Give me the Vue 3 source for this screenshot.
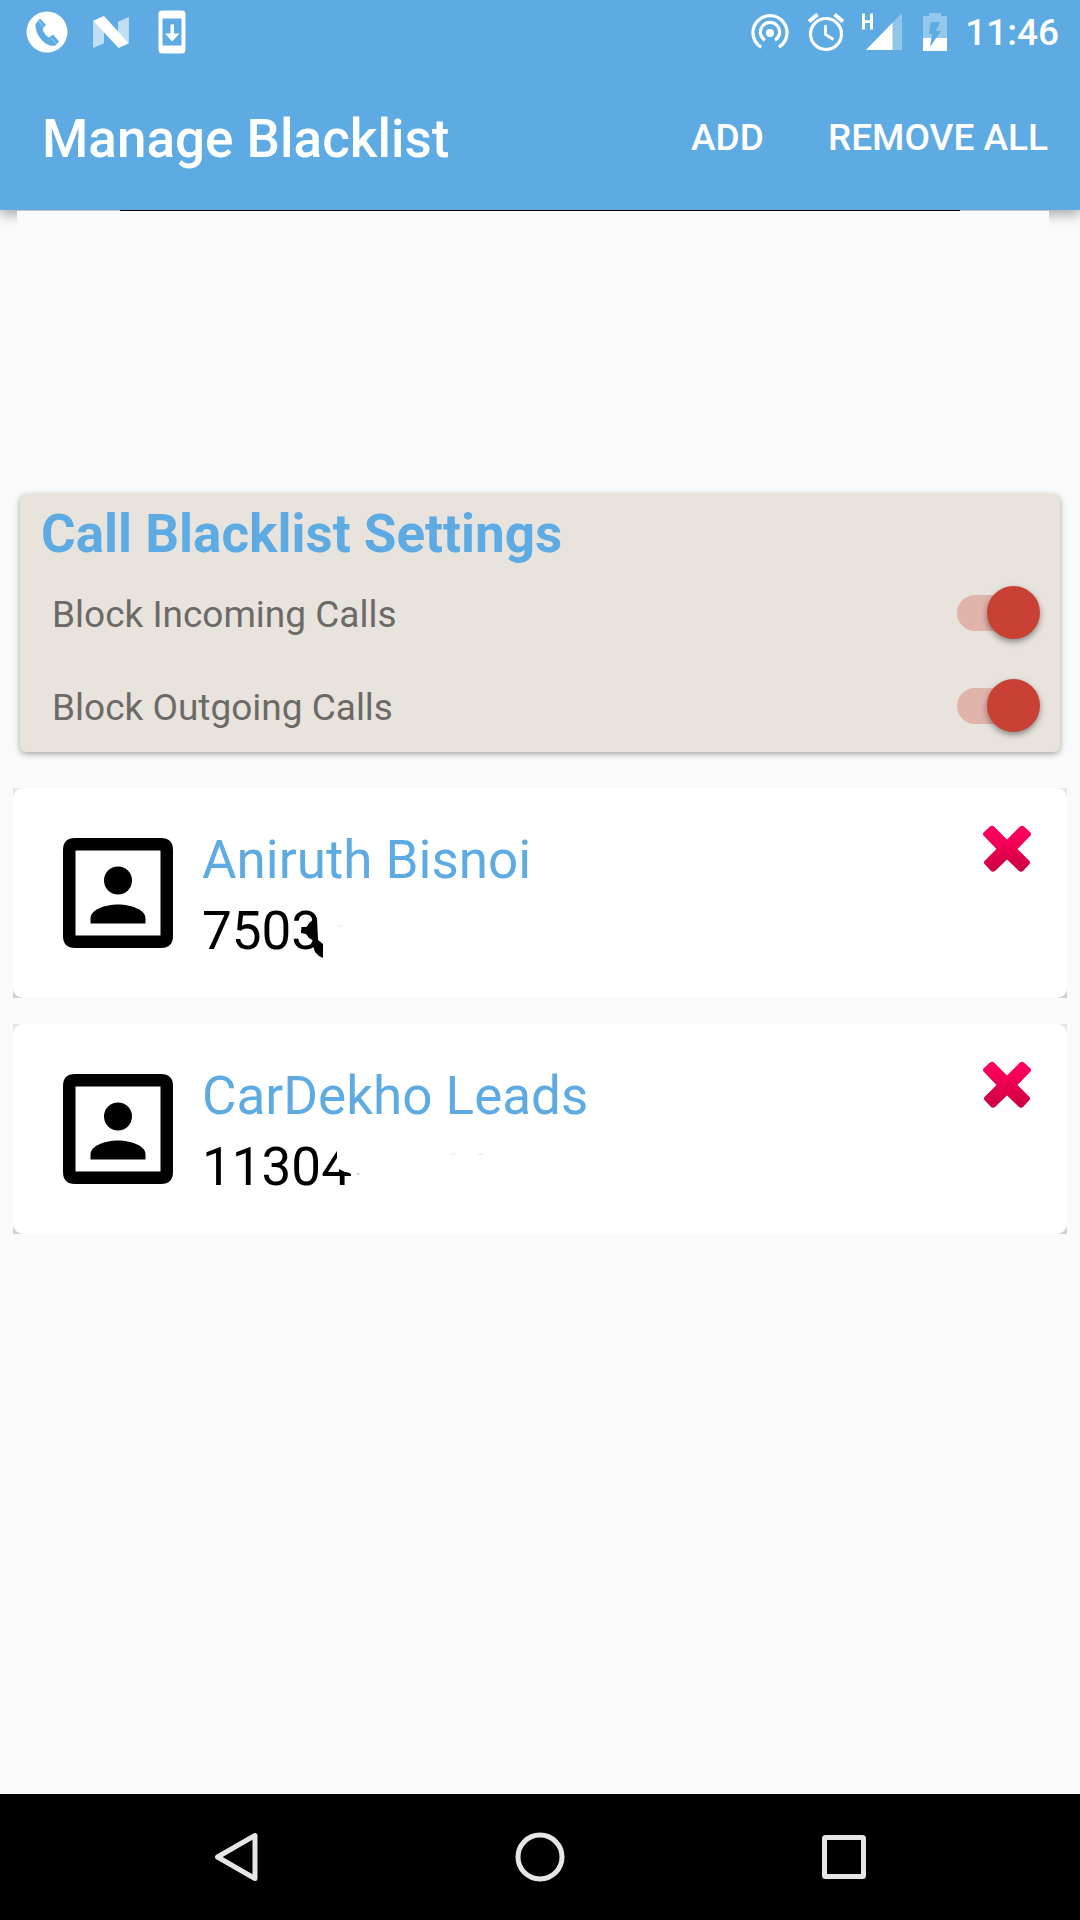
<script setup>
import { ref } from 'vue'

const settings = ref([
  { id: 'incoming', label: 'Block Incoming Calls', on: true },
  { id: 'outgoing', label: 'Block Outgoing Calls', on: true },
])

const contacts = ref([
  { name: 'Aniruth Bisnoi', number: '7503', mask: 'blot' },
  { name: 'CarDekho Leads', number: '11304', mask: 'erase' },
])

function remove(index) {
  contacts.value.splice(index, 1)
}

function removeAll() {
  contacts.value = []
}
</script>

<template>
  <div class="screen">
    <header class="top">
      <div class="status">
        <div class="notes">
          <svg width="42" height="42" viewBox="0 0 42 42" aria-hidden="true">
            <circle cx="21" cy="21" r="20.5" fill="#fff" />
            <path d="M9.500 13l4.500-5.500 6 6.500-3.500 4c1 4 3.500 6.500 6.500 8.500l4-3 6 7-3.500 4c-8 2.500-20.500-8.500-20-21.500z" fill="#5dabe2" />
            <path d="M12.500 9.500l5.500 7M25.500 27.500l6 6.500" stroke="#fff" stroke-width="0.800" opacity=".6" />
          </svg>
          <svg width="38" height="32" viewBox="0 0 40 34" aria-hidden="true">
            <path d="M1 5v29l11.500-5V10zM39 1v28L27.500 17V6z" fill="#fff" opacity=".62" />
            <path d="M1 5l11.500-5L39 29l-11 5z" fill="#fff" />
          </svg>
          <svg width="28" height="44" viewBox="0 0 28 44" aria-hidden="true">
            <path fill-rule="evenodd" d="M4 .5h20q3.500 0 3.500 3.500v35.500q0 4-3.500 4H4q-3.500 0-3.500-4V4Q.5.500 4 .5zM4.500 8.500v27h19v-27z" fill="#fff" />
            <path d="M12.500 14.500h3.500v9h5.500L14.200 31.500 7 23.500h5.500z" fill="#fff" />
          </svg>
        </div>
        <div class="signals">
          <svg width="38" height="38" viewBox="0 0 38 38" fill="none" stroke="#fff" stroke-width="3.200" aria-hidden="true">
            <path d="M10.200 34.200a17 17 0 1 1 17.600 0" />
            <path d="M14 27.200a9.600 9.600 0 1 1 10 0" />
            <circle cx="19" cy="20" r="4" fill="#fff" stroke="none" />
          </svg>
          <svg width="38" height="38" viewBox="0 0 38 38" fill="none" stroke="#fff" stroke-width="3.200" aria-hidden="true">
            <circle cx="19" cy="21" r="15.500" />
            <path d="M2 8.500l8.500-7M36 8.500l-8.500-7" stroke-width="4" />
            <path d="M18.500 12v9.500l8 5" stroke-width="2.800" />
          </svg>
          <svg class="cell" width="42" height="38" viewBox="0 0 42 38" aria-hidden="true">
            <path d="M41 0v37H5z" fill="#fff" opacity=".32" />
            <path d="M31.500 9.800V37H5z" fill="#fff" />
            <path d="M1 .5h3v6.700h5V.5h3v16H9V10H4v6.500H1z" fill="#fff" />
          </svg>
          <svg width="24" height="38" viewBox="0 0 24 38" aria-hidden="true">
            <path d="M0 3h6V0h12v3h6v22H0z" fill="#fff" opacity=".34" />
            <path d="M0 25h24v13H0z" fill="#fff" />
            <path d="M8 9h9l-4 9h5L7 34l2-13H6z" fill="#5dabe2" />
          </svg>
          <time class="clock">11:46</time>
        </div>
      </div>
      <div class="bar">
        <h1>Manage Blacklist</h1>
        <div class="actions">
          <button type="button">ADD</button>
          <button type="button" @click="removeAll">REMOVE ALL</button>
        </div>
      </div>
    </header>

    <main>
      <div class="panel"><div class="rule"></div></div>

      <section class="settings">
        <h2>Call Blacklist Settings</h2>
        <label v-for="item in settings" :key="item.id" class="setting" :for="item.id">
          <span>{{ item.label }}</span>
          <input :id="item.id" v-model="item.on" type="checkbox" role="switch" class="switch" />
        </label>
      </section>

      <ul class="contacts">
        <li v-for="(contact, index) in contacts" :key="contact.name" class="slot">
          <article class="contact">
            <svg class="avatar" width="110" height="110" viewBox="0 0 110 110" aria-hidden="true">
              <path fill-rule="evenodd" d="M12 0h86q12 0 12 12v86q0 12-12 12H12Q0 110 0 98V12Q0 0 12 0zM12.500 12.500v85h85v-85z" />
              <circle cx="55" cy="42.500" r="14" />
              <path d="M27.500 85.500v-5c0-9 15-14 27.500-14s27.500 5 27.500 14v5z" />
            </svg>
            <div class="who">
              <h3>{{ contact.name }}</h3>
              <p>
                {{ contact.number }}
                <svg v-if="contact.mask === 'blot'" class="mask" width="160" height="56" viewBox="0 0 160 56" aria-hidden="true">
                  <path d="M18 0h10v56H18z" fill="#fff" />
                  <path d="M18 14l-3 1-5 4-3 5-5 2v3l5 1 3 4 5 3-1 5 2 6 4 4 4 2V40l-5-4z" />
                  <path d="M38 22l5-1-2 2z" fill="#eee" />
                </svg>
                <svg v-else class="mask" width="160" height="56" viewBox="0 0 160 56" aria-hidden="true">
                  <path d="M8 0h22v33h-9l-5-1-6-3-2-2z" fill="#fff" />
                  <path d="M10 29l4 3 8 2v2H10z" />
                  <path d="M27 34l5-1-3 2z" fill="#bbb" />
                  <path d="M121 15l4-2h2l-2 2zM148 15l3-2h4l-1 2z" fill="#eee" />
                </svg>
              </p>
            </div>
            <button type="button" class="remove" :aria-label="'Remove ' + contact.name" @click="remove(index)">
              <svg width="50" height="48" viewBox="0 0 50 48" aria-hidden="true">
                <defs>
                  <linearGradient :id="'cross' + index" x1="0" y1="0" x2="0" y2="1">
                    <stop offset="0" stop-color="#ff0060" />
                    <stop offset=".4" stop-color="#f20055" />
                    <stop offset="1" stop-color="#c9003f" />
                  </linearGradient>
                </defs>
                <path d="M8 1.500q2-1.500 4 0L25 14.500 38 1.500q2-1.500 4 0l6.500 6q1 1.500 0 3L35.500 24l12 12q1 1.500 0 3L41 46q-2 1.500-4 0L25 34.500 13 46q-2 1.500-4 0l-6.500-7q-1-1.500 0-3L14.500 24 1.500 10.500q-1-1.500 0-3z" :fill="'url(#cross' + index + ')'" />
              </svg>
            </button>
          </article>
        </li>
      </ul>
    </main>

    <nav class="nav" aria-label="System">
      <button type="button" aria-label="Back">
        <svg width="50" height="50" viewBox="0 0 50 50"><path d="M44 3.500v43L6.500 25z" /></svg>
      </button>
      <button type="button" aria-label="Home">
        <svg width="50" height="50" viewBox="0 0 50 50"><circle cx="25" cy="25" r="22" /></svg>
      </button>
      <button type="button" aria-label="Overview">
        <svg width="50" height="50" viewBox="0 0 50 50"><rect x="5.500" y="5.500" width="39" height="39" rx="1" /></svg>
      </button>
    </nav>
  </div>
</template>

<style>
body {
  margin: 0;
  background: #fafafa;
}
</style>

<style scoped>
.screen {
  display: flex;
  flex-direction: column;
  min-height: 100vh;
  background: #fafafa;
  font-family: Roboto, "Noto Sans", sans-serif;
  color: #000;
}

h1,
h2,
h3,
p,
ul {
  margin: 0;
  padding: 0;
}

button {
  padding: 0;
  border: 0;
  background: none;
  color: inherit;
  font: inherit;
  cursor: pointer;
}

svg {
  display: block;
  flex: none;
}

.top {
  background: #5dabe2;
  color: #fff;
  box-shadow: 0 4px 12px rgba(0, 0, 0, 0.35);
}

.status {
  display: flex;
  justify-content: space-between;
  height: 64px;
  padding: 0 21px 0 26px;
}

.notes,
.signals {
  display: flex;
  align-items: center;
}

.notes {
  gap: 24px;
}

.notes svg:last-child {
  margin-left: 4px;
}

.signals {
  gap: 18px;
}

.cell {
  margin: 0 2px 0 -2px;
}

.clock {
  padding-top: 2px;
  font-size: 37px;
  font-weight: 500;
  line-height: 64px;
}

.bar {
  display: flex;
  align-items: center;
  justify-content: space-between;
  height: 146px;
  padding: 0 32px 0 42px;
  box-sizing: border-box;
}

h1 {
  padding-top: 4px;
  font-size: 53px;
  font-weight: 500;
  line-height: 64px;
}

.actions {
  display: flex;
  gap: 64px;
  padding-top: 2px;
  font-size: 37px;
  font-weight: 500;
  line-height: 44px;
}

main {
  flex: 1;
  position: relative;
}

.panel {
  height: 284px;
  margin: 0 31px 0 17px;
  border-top: 1px solid #c4c4c4;
  background: #fafafa;
  box-sizing: border-box;
}

.rule {
  height: 1px;
  margin: -1px 89px 0 103px;
  background: #000;
}

.settings {
  margin: 0 20px;
  padding: 8px 20px 0 21px;
  height: 258px;
  box-sizing: border-box;
  border-radius: 6px;
  background: #e8e4dd;
  box-shadow: 0 2px 6px rgba(0, 0, 0, 0.35);
}

h2 {
  color: #5dabe2;
  font-size: 53px;
  font-weight: 700;
  line-height: 64px;
}

.setting {
  display: flex;
  align-items: center;
  justify-content: space-between;
  height: 93px;
  padding-left: 11px;
  color: #6c6a66;
  font-size: 37px;
  line-height: 44px;
}

.setting span {
  padding-top: 4px;
}

.switch {
  position: relative;
  width: 83px;
  height: 54px;
  margin: 0;
  appearance: none;
}

.switch::before {
  content: "";
  position: absolute;
  inset: 9px 10px 9px 0;
  border-radius: 18px;
  background: #e0b3ab;
}

.switch::after {
  content: "";
  position: absolute;
  top: 0;
  right: 0;
  width: 53px;
  height: 53px;
  border-radius: 50%;
  background: #c84134;
  box-shadow: 0 3px 6px rgba(0, 0, 0, 0.4);
}

.switch:not(:checked)::after {
  right: 30px;
}

.contacts {
  display: flex;
  flex-direction: column;
  gap: 26px;
  margin: 36px 13px;
  list-style: none;
}

.slot {
  background: linear-gradient(#e6e6e6, #d0d0d0);
}

.contact {
  display: flex;
  align-items: flex-start;
  height: 210px;
  padding: 37px 35px 0 50px;
  box-sizing: border-box;
  border-radius: 10px;
  background: #fff;
}

.avatar {
  margin-top: 13px;
}

.who {
  flex: 1;
  margin-left: 29px;
  font-size: 53px;
  line-height: 71px;
}

h3 {
  color: #5dabe2;
  font-size: 53px;
  font-weight: 400;
}

.who p {
  display: flex;
  align-items: center;
}

.mask {
  margin-left: -22px;
}

.nav {
  display: flex;
  justify-content: center;
  gap: 254px;
  height: 126px;
  background: #000;
}

.nav svg {
  fill: none;
  stroke: #e6e6e6;
  stroke-width: 5;
  stroke-linejoin: round;
}
</style>
